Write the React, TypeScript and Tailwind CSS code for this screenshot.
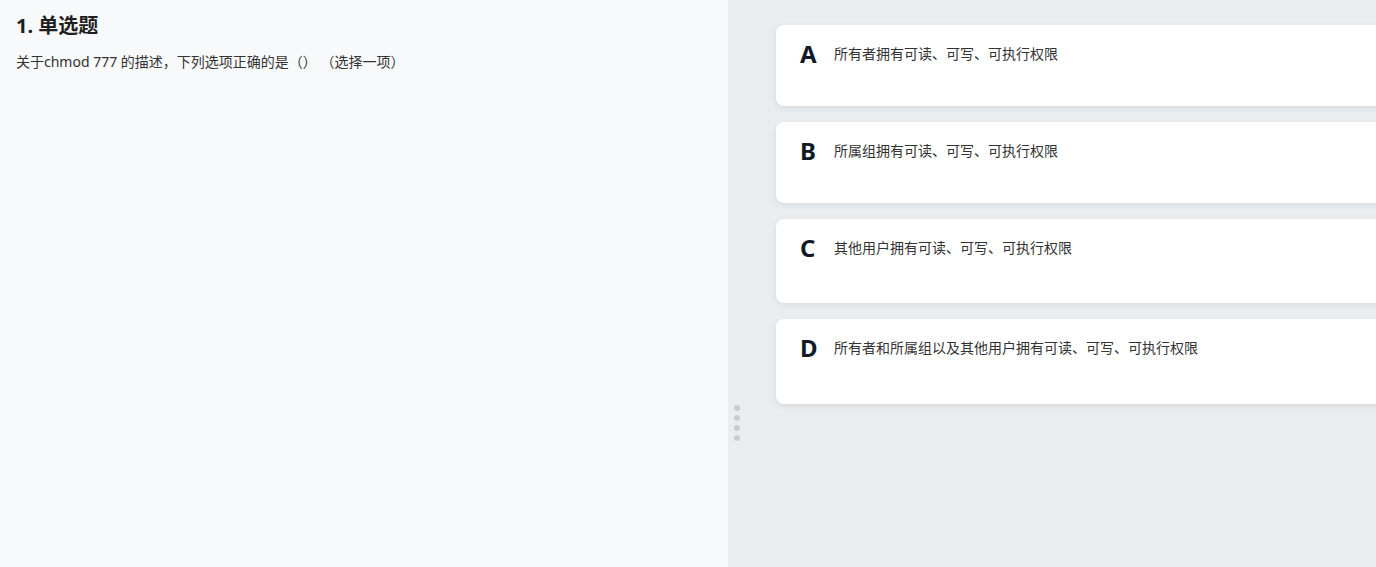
import React from "react";

const options = [
  { k: "A", t: "所有者拥有可读、可写、可执行权限", h: "h-[81px]" },
  { k: "B", t: "所属组拥有可读、可写、可执行权限", h: "h-[81px]" },
  { k: "C", t: "其他用户拥有可读、可写、可执行权限", h: "h-[84px]" },
  { k: "D", t: "所有者和所属组以及其他用户拥有可读、可写、可执行权限", h: "h-[85px]" },
];

export default function App() {
  return (
    <div
      className="flex h-[567px] w-[1376px] overflow-hidden [text-spacing-trim:space-all]"
      style={{ fontFamily: '"Noto Sans", "Noto Sans CJK SC", sans-serif' }}
    >
      <div className="w-[728px] shrink-0 bg-[#f8f9fb] px-4 pt-[11px]">
        <h1 className="text-[20px] font-bold leading-[30px] text-[#1f1f1f]">1. 单选题</h1>
        <p className="mt-[11px] text-[14px] leading-[20px] text-[#333]">
          关于chmod 777 的描述，下列选项正确的是（） （选择一项）
        </p>
      </div>
      <div className="relative flex flex-1 bg-[#e9edf0]">
        <div className="flex w-[48px] shrink-0 items-start justify-start pl-[6px] pt-[405px]">
          <div className="flex flex-col gap-[4px]">
            <span className="h-[6px] w-[6px] rounded-full bg-[#c9cbce]" />
            <span className="h-[6px] w-[6px] rounded-full bg-[#c9cbce]" />
            <span className="h-[6px] w-[6px] rounded-full bg-[#c9cbce]" />
            <span className="h-[6px] w-[6px] rounded-full bg-[#c9cbce]" />
          </div>
        </div>
        <div className="flex flex-1 flex-col gap-4 pt-[25px]">
          {options.map((o) => (
            <div
              key={o.k}
              className={`flex ${o.h} w-[640px] shrink-0 items-start gap-[16px] rounded-lg bg-white pl-[24px] pt-[12px] shadow-[0_2px_6px_rgba(0,0,0,0.08)]`}
            >
              <span className="w-[18px] text-[24px] font-bold leading-[34px] text-[#111a28]">{o.k}</span>
              <span className="pt-[6px] text-[14px] leading-[22px] text-[#333]">{o.t}</span>
            </div>
          ))}
        </div>
      </div>
    </div>
  );
}
